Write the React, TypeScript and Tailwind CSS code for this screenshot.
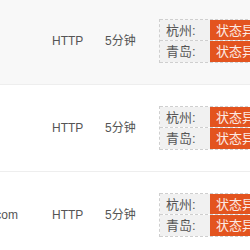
const rows = [
  { domain: "", bg: "bg-[#f8f8f8]" },
  { domain: "", bg: "bg-white" },
  { domain: "example.com", bg: "bg-white" },
];

const regions = ["杭州:", "青岛:"];

function StatusBox() {
  return (
    <div className="flex flex-col w-[110px] border-l border-dashed border-[#cfcfcf]">
      {regions.map((r, i) => (
        <div
          key={r}
          className={
            "flex h-[22px] border-b border-dashed border-[#cfcfcf] " +
            (i === 0 ? "border-t" : "")
          }
        >
          <div className="w-[50px] shrink-0 bg-[#f1f1f1] pl-[6px] leading-[21px] text-[13px] text-[#555]">
            {r}
          </div>
          <div className="flex-1 bg-[#e3541f] pl-[6px] leading-[21px] text-[13px] text-[#fbe9e2] whitespace-nowrap">
            状态异常
          </div>
        </div>
      ))}
    </div>
  );
}

export default function App() {
  return (
    <div
      className="w-[250px] h-[250px] overflow-hidden bg-white"
      style={{ fontFamily: '"Liberation Sans", "Noto Sans CJK SC", sans-serif' }}
    >
      <div className="-mt-[2px]">
        {rows.map((row, i) => (
          <div
            key={i}
            className={"flex items-center h-[87px] border-b border-[#eeeeee] " + row.bg}
          >
            <div className="w-[52px] shrink-0 flex justify-end pr-[34px] overflow-visible">
              <span className="whitespace-nowrap text-[12px] text-[#555]">{row.domain}</span>
            </div>
            <div className="w-[53px] shrink-0 text-[12px] text-[#555]">HTTP</div>
            <div className="w-[54px] shrink-0 text-[12px] text-[#555]">5分钟</div>
            <StatusBox />
          </div>
        ))}
      </div>
    </div>
  );
}
